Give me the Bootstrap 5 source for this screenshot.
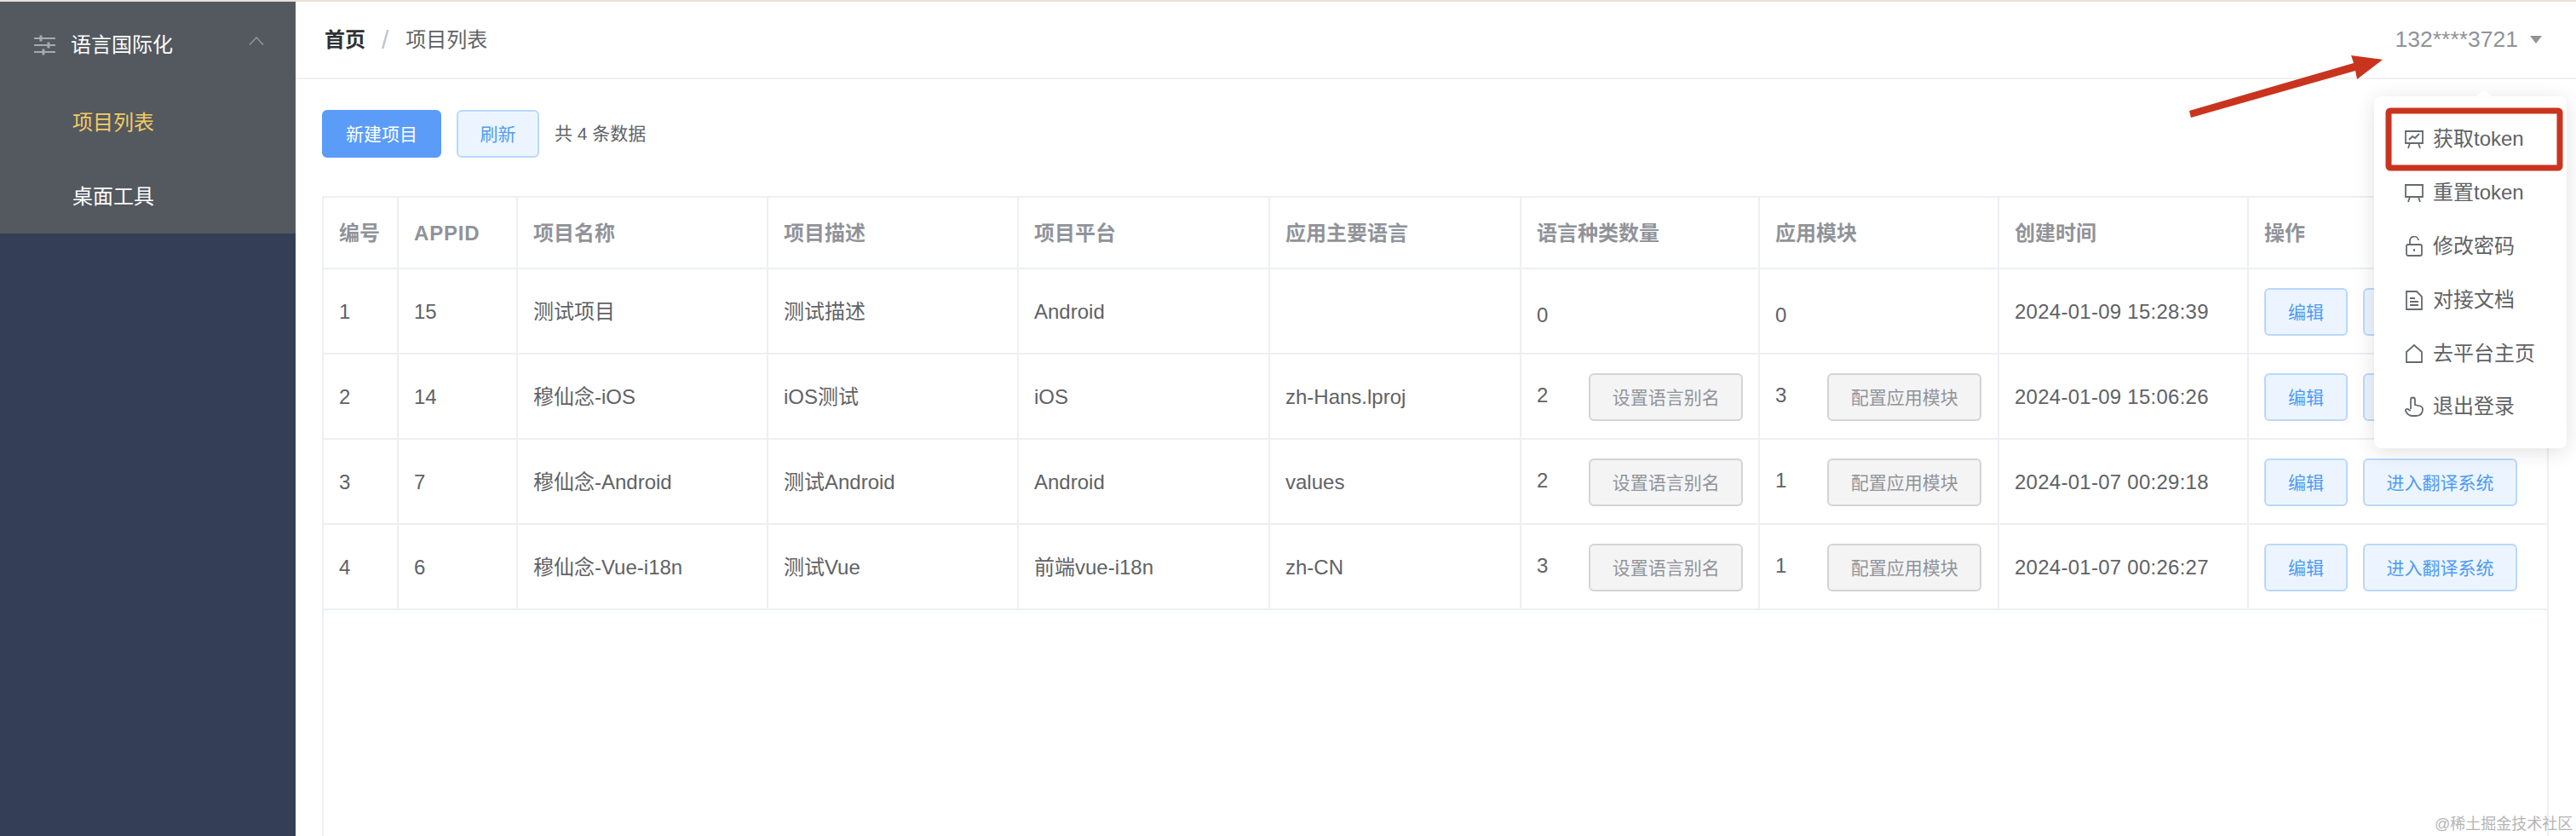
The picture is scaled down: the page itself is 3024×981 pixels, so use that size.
<!DOCTYPE html>
<html lang="zh">
<head>
<meta charset="utf-8">
<title>项目列表</title>
<link href="https://cdn.jsdelivr.net/npm/bootstrap@5.3.0/dist/css/bootstrap.min.css" rel="stylesheet">
<style>
html,body{height:981px;overflow:hidden;background:#fff;font-family:"Liberation Sans","Noto Sans CJK SC",sans-serif;color:#606266}
.top-strip{height:2px;background:#e8dfd6}
.shell{height:979px;position:relative}
.side{width:347px;flex:none;background:#343e56}
.side-menu{height:272px;background:#53595f;color:#fff;font-size:24px}
.side-head{height:98px;padding:4px 37px 0 40px}
.side-head svg.ico{width:25px;height:26px;margin-right:18px}
.side-head svg.chev{margin-bottom:11px}
.side-item{height:87px;padding-left:85px;display:flex;align-items:center}
.side-item.on{color:#f3cb63}
.main-col{min-width:0}
.top-bar{height:91px;flex:none;border-bottom:2px solid #f1f1f1;padding:0 40px 0 34px;font-size:24px}
.crumb-strong{font-weight:700;color:#303133}
.crumb-sep{color:#c0c4cc;margin:0 20px 0 19px;font-size:30px;line-height:1}
.user-name{font-size:26.5px;color:#909399}
.caret-down{width:0;height:0;border-left:7px solid transparent;border-right:7px solid transparent;border-top:9px solid #909399;margin-left:14px}
.page-body{padding:36px 32px 0 31px;min-height:0}
.tool-row{height:56px;margin-bottom:45px;font-size:21px}
.ui-btn{height:56px;padding:0;border-radius:6px;border:2px solid;font-size:21px;line-height:1;display:inline-flex;align-items:center;justify-content:center}
.ui-primary{width:140px;background:#5a9cf8;border-color:#5a9cf8;color:#fff}
.ui-plain{background:#ecf5ff;border-color:#b9d8fb;color:#4f9bf5}
.ui-refresh{width:97px;margin-left:18px;margin-right:18px}
.ui-edit{width:98px}
.ui-enter{width:181px;margin-left:18px}
.ui-gray{width:181px;margin-left:48px;background:#f4f4f5;border-color:#d3d4d6;color:#909399}
.grid-wrap{border:2px solid #edeff4;border-bottom:0;flex:1;min-height:0}
.data-table{table-layout:fixed;width:2610px;margin:0;font-size:24px;color:#606266;border-collapse:collapse}
.data-table th,.data-table td{border:0;border-right:2px solid #edeff4;border-bottom:2px solid #edeff4;padding:2px 18px 0;vertical-align:middle;white-space:nowrap;color:#606266;box-shadow:none}
.data-table th{height:83px;font-weight:700;color:#909399}
.data-table td{height:100px}
.data-table tr>*:last-child{border-right:0}
.low-num{position:relative;top:4px}
.wide-caps{letter-spacing:.8px}
.stamp{letter-spacing:.26px}
.c1{width:87px}.c2{width:140px}.c3,.c4{width:294px}.c5,.c6{width:295px}.c7{width:280px}.c8{width:281px}.c9{width:293px}
.pop-menu{display:block;position:absolute;left:2787px;top:111px;width:226px;height:413px;margin:0;padding:19px 0 17px;border:0;border-radius:8px;background:#fff;box-shadow:0 4px 24px rgba(0,0,0,.12);list-style:none}
.pop-menu::before{content:"";position:absolute;left:120px;top:-8px;width:0;height:0;border-left:9px solid transparent;border-right:9px solid transparent;border-bottom:8px solid #fff}
.pop-menu .dropdown-item{height:62.8px;padding:0 0 0 36px;display:flex;align-items:center;font-size:24px;color:#606266}
.pop-menu svg{width:22px;height:24px;margin-right:11px;flex:none}
.mark-layer{position:absolute;left:0;top:-2px;width:3024px;height:981px;pointer-events:none;z-index:1010}
.water{position:absolute;left:2858px;top:953px;font-size:18px;line-height:24px;color:#b4b4b4;white-space:nowrap}
</style>
</head>
<body>
<div class="top-strip"></div>
<div class="shell d-flex">
  <aside class="side">
    <div class="side-menu">
      <div class="side-head d-flex align-items-center">
        <svg class="ico" viewBox="0 0 25 26" fill="none" stroke="#a6a9b0" stroke-width="2"><path d="M0 5h25M0 13h25M0 21h25"/><path d="M8 1.500v7M17 9.500v7M11 17.500v7" stroke-width="3"/></svg>
        <span>语言国际化</span>
        <svg class="chev ms-auto" width="18" height="10" viewBox="0 0 18 10" fill="none" stroke="#8f939a" stroke-width="1.600"><path d="M1 9.500 9 1l8 8.500"/></svg>
      </div>
      <div class="side-item on">项目列表</div>
      <div class="side-item">桌面工具</div>
    </div>
  </aside>
  <main class="main-col flex-grow-1 d-flex flex-column">
    <header class="top-bar d-flex align-items-center">
      <span class="crumb-strong">首页</span><span class="crumb-sep">/</span><span>项目列表</span>
      <span class="user-name ms-auto">132****3721</span><span class="caret-down"></span>
    </header>
    <section class="page-body flex-grow-1 d-flex flex-column">
      <div class="tool-row d-flex align-items-center">
        <button class="btn ui-btn ui-primary">新建项目</button>
        <button class="btn ui-btn ui-plain ui-refresh">刷新</button>
        <span>共 4 条数据</span>
      </div>
      <div class="grid-wrap">
        <table class="table data-table">
          <colgroup><col class="c1"><col class="c2"><col class="c3"><col class="c4"><col class="c5"><col class="c6"><col class="c7"><col class="c8"><col class="c9"><col></colgroup>
          <thead><tr><th>编号</th><th class="wide-caps">APPID</th><th>项目名称</th><th>项目描述</th><th>项目平台</th><th>应用主要语言</th><th>语言种类数量</th><th>应用模块</th><th>创建时间</th><th>操作</th></tr></thead>
          <tbody>
            <tr><td>1</td><td>15</td><td>测试项目</td><td>测试描述</td><td>Android</td><td></td><td><span class="low-num">0</span></td><td><span class="low-num">0</span></td><td class="stamp">2024-01-09 15:28:39</td><td><button class="btn ui-btn ui-plain ui-edit">编辑</button><button class="btn ui-btn ui-plain ui-enter">进入翻译系统</button></td></tr>
            <tr><td>2</td><td>14</td><td>穆仙念-iOS</td><td>iOS测试</td><td>iOS</td><td>zh-Hans.lproj</td><td><span>2</span><button class="btn ui-btn ui-gray">设置语言别名</button></td><td><span>3</span><button class="btn ui-btn ui-gray">配置应用模块</button></td><td class="stamp">2024-01-09 15:06:26</td><td><button class="btn ui-btn ui-plain ui-edit">编辑</button><button class="btn ui-btn ui-plain ui-enter">进入翻译系统</button></td></tr>
            <tr><td>3</td><td>7</td><td>穆仙念-Android</td><td>测试Android</td><td>Android</td><td>values</td><td><span>2</span><button class="btn ui-btn ui-gray">设置语言别名</button></td><td><span>1</span><button class="btn ui-btn ui-gray">配置应用模块</button></td><td class="stamp">2024-01-07 00:29:18</td><td><button class="btn ui-btn ui-plain ui-edit">编辑</button><button class="btn ui-btn ui-plain ui-enter">进入翻译系统</button></td></tr>
            <tr><td>4</td><td>6</td><td>穆仙念-Vue-i18n</td><td>测试Vue</td><td>前端vue-i18n</td><td>zh-CN</td><td><span>3</span><button class="btn ui-btn ui-gray">设置语言别名</button></td><td><span>1</span><button class="btn ui-btn ui-gray">配置应用模块</button></td><td class="stamp">2024-01-07 00:26:27</td><td><button class="btn ui-btn ui-plain ui-edit">编辑</button><button class="btn ui-btn ui-plain ui-enter">进入翻译系统</button></td></tr>
          </tbody>
        </table>
      </div>
    </section>
  </main>
  <ul class="dropdown-menu pop-menu">
    <li><a class="dropdown-item" href="#"><svg viewBox="0 0 22 24" fill="none" stroke="#666a70" stroke-width="1.800"><path d="M1 3h20v14H1zM0 3h22M6 17l-2 6M16 17l2 6M5 13l4-4 3 2 5-5"/></svg>获取token</a></li>
    <li><a class="dropdown-item" href="#"><svg viewBox="0 0 22 24" fill="none" stroke="#666a70" stroke-width="1.800"><path d="M1 3h20v14H1zM0 3h22M6 17l-2 6M16 17l2 6"/></svg>重置token</a></li>
    <li><a class="dropdown-item" href="#"><svg viewBox="0 0 22 24" fill="none" stroke="#666a70" stroke-width="1.800"><rect x="2" y="10" width="18" height="13" rx="2"/><path d="M6 10V6a5 5 0 0 1 10-1M11 15v3"/></svg>修改密码</a></li>
    <li><a class="dropdown-item" href="#"><svg viewBox="0 0 22 24" fill="none" stroke="#666a70" stroke-width="1.800"><path d="M2 2h12l6 6v15H2zM6 10h6M6 14h10M6 18h10"/></svg>对接文档</a></li>
    <li><a class="dropdown-item" href="#"><svg viewBox="0 0 22 24" fill="none" stroke="#666a70" stroke-width="1.800"><path d="M2 22V10l9-8 9 8v12z"/></svg>去平台主页</a></li>
    <li><a class="dropdown-item" href="#"><svg viewBox="0 0 22 24" fill="none" stroke="#666a70" stroke-width="1.800"><path d="M7 15V4a2.500 2.500 0 0 1 5 0v6l6 1.500c2 .6 3 1.800 3 3.500 0 5-3 8-8 8H9c-3 0-5-1-7-4l-1-2c-.5-2 2-3 4-1l2 1"/></svg>退出登录</a></li>
  </ul>
  <svg class="mark-layer" viewBox="0 0 3024 981">
    <rect x="2804" y="130" width="201" height="67" rx="2" fill="none" stroke="#c9341f" stroke-width="7"/>
    <polygon points="2570,130 2763,74 2760,65 2797,70 2767,93 2765,83 2572,138" fill="#c9341f"/>
  </svg>
  <div class="water">@稀土掘金技术社区</div>
</div>
<script src="https://cdn.jsdelivr.net/npm/bootstrap@5.3.0/dist/js/bootstrap.bundle.min.js"></script>
</body>
</html>
